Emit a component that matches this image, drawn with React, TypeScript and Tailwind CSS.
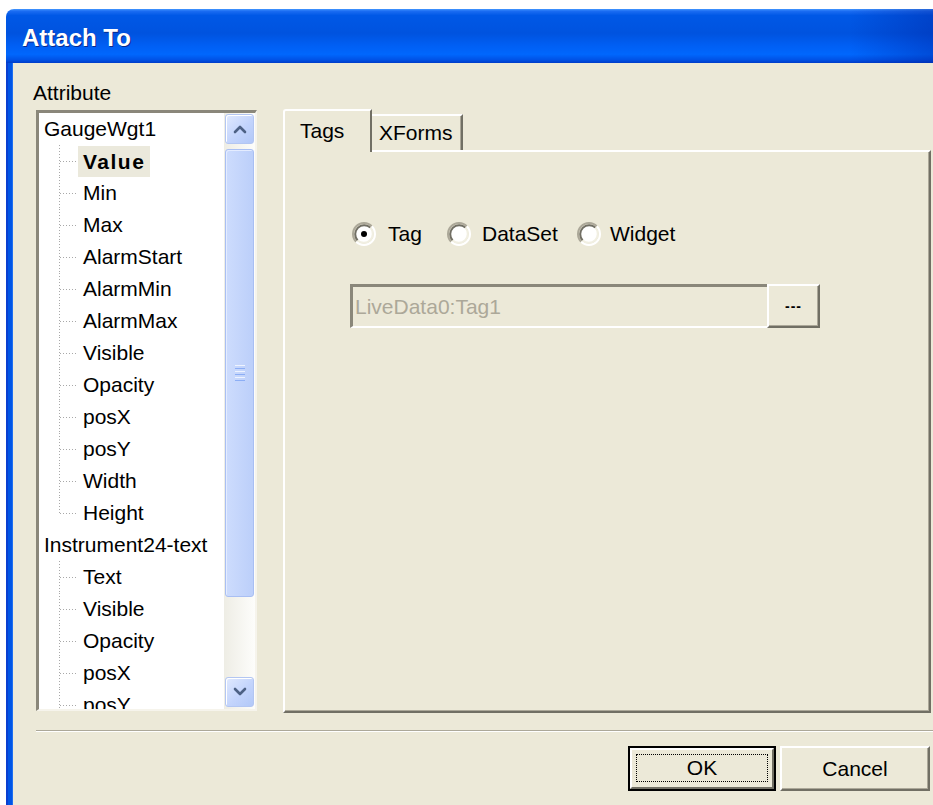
import React from 'react';

type Group = { name: string; items: string[] };

const groups: Group[] = [
  {
    name: 'GaugeWgt1',
    items: ['Value', 'Min', 'Max', 'AlarmStart', 'AlarmMin', 'AlarmMax', 'Visible', 'Opacity', 'posX', 'posY', 'Width', 'Height'],
  },
  {
    name: 'Instrument24-text',
    items: ['Text', 'Visible', 'Opacity', 'posX', 'posY'],
  },
];

// dotted tree connector: vertical guide + branch to the label
const Branch = ({ last }: { last: boolean }) => (
  <svg width="39" height="32" className="shrink-0">
    <line x1="20.5" y1="0" x2="20.5" y2={last ? 16 : 32} stroke="#a8a8a8" strokeDasharray="1 2" />
    <line x1="21" y1="16.5" x2="39" y2="16.5" stroke="#a8a8a8" strokeDasharray="1 2" />
  </svg>
);

const Chevron = ({ up }: { up: boolean }) => (
  <svg width="14" height="10" viewBox="0 0 14 10">
    <path d={up ? 'M2 8 L7 3 L12 8' : 'M2 2 L7 7 L12 2'} fill="none" stroke="#4d6185" strokeWidth="2.6" strokeLinecap="round" strokeLinejoin="round" />
  </svg>
);

const ScrollButton = ({ up }: { up: boolean }) => (
  <div className="h-[30px] rounded-[3px] border border-[#b3c6f2] bg-[linear-gradient(135deg,#e0e9fe_0%,#c3d4fc_55%,#b2c8f8_100%)] flex items-center justify-center shadow-[inset_1px_1px_0_#ffffff]">
    <Chevron up={up} />
  </div>
);

const ScrollBar = () => (
  <div className="w-[31px] h-full flex flex-col px-[1px] pt-[1px] pb-[2px] bg-[linear-gradient(to_right,#eeede5,#fdfdfb)]">
    <ScrollButton up />
    <div className="mt-[5px] h-[448px] rounded-[3px] border border-[#a9bff3] bg-[linear-gradient(to_right,#cddcfd,#bccffa)] shadow-[inset_1px_1px_0_#e4ecff] flex flex-col items-center justify-center gap-[2px]">
      <div className="w-[10px] h-[1px] bg-[#eef3ff]" />
      <div className="w-[10px] h-[1px] bg-[#8caef5]" />
      <div className="w-[10px] h-[1px] bg-[#eef3ff]" />
      <div className="w-[10px] h-[1px] bg-[#8caef5]" />
      <div className="w-[10px] h-[1px] bg-[#eef3ff]" />
      <div className="w-[10px] h-[1px] bg-[#8caef5]" />
    </div>
    <div className="flex-1" />
    <ScrollButton up={false} />
  </div>
);

const TreeBox = () => (
  <div className="mt-[1px] w-[221px] h-[601px] border-t-[3px] border-l-[3px] border-t-[#8a877a] border-l-[#8a877a] border-r-2 border-b-2 border-r-[#f6f4ec] border-b-[#f6f4ec] bg-white flex">
    <div className="flex-1 overflow-hidden">
      {groups.map((g) => (
        <div key={g.name}>
          <div className="h-[32px] leading-[32px] pl-[5px] whitespace-nowrap">{g.name}</div>
          {g.items.map((it, i) => (
            <div key={it + i} className="h-[32px] flex items-center">
              <Branch last={g.name === 'GaugeWgt1' && i === g.items.length - 1} />
              {g.name === 'GaugeWgt1' && i === 0 ? (
                <span className="h-[31px] leading-[31px] px-[5px] bg-[#ebe9dc] font-bold tracking-[1.5px]">{it}</span>
              ) : (
                <span className="pl-[5px] whitespace-nowrap">{it}</span>
              )}
            </div>
          ))}
        </div>
      ))}
    </div>
    <ScrollBar />
  </div>
);

const Radio = ({ checked }: { checked?: boolean }) => (
  <svg width="24" height="24" viewBox="0 0 24 24" className="shrink-0">
    <circle cx="12" cy="12" r="9" fill="#ffffff" />
    <path d="M4.22 19.78 A11 11 0 0 1 19.78 4.22" fill="none" stroke="#aca899" strokeWidth="2" />
    <path d="M19.78 4.22 A11 11 0 0 1 4.22 19.78" fill="none" stroke="#ffffff" strokeWidth="2" />
    <path d="M5.64 18.36 A9 9 0 0 1 18.36 5.64" fill="none" stroke="#716f64" strokeWidth="2" />
    <path d="M18.36 5.64 A9 9 0 0 1 5.64 18.36" fill="none" stroke="#f1efe2" strokeWidth="2" />
    {checked && <circle cx="12" cy="12" r="3" fill="#000000" />}
  </svg>
);

const TabArea = () => (
  <div className="ml-[26px] w-[648px] h-[604px] flex flex-col">
    <div className="h-[41px] flex items-end">
      <div className="relative z-10 -mb-[2px] w-[89px] h-[43px] bg-[#ece9d8] border-l-2 border-t-2 border-r-2 border-l-white border-t-white border-r-[#716f64] rounded-tl-[3px] pl-[15px] pt-[8px]">
        Tags
      </div>
      <div className="w-[91px] h-[36px] border-t-2 border-r-2 border-t-white border-r-[#716f64] shadow-[inset_-1px_0_0_#aca899] pl-[7px] pt-[5px]">
        XForms
      </div>
    </div>
    <div className="flex-1 border-2 border-t-white border-l-white border-r-[#716f64] border-b-[#716f64] shadow-[inset_-1px_-1px_0_#aca899] pl-[65px] pt-[70px]">
      <div className="flex items-center h-[24px] pl-[2px]">
        <div className="w-[95px] flex items-center gap-[12px]">
          <Radio checked />
          <span>Tag</span>
        </div>
        <div className="w-[130px] flex items-center gap-[11px]">
          <Radio />
          <span>DataSet</span>
        </div>
        <div className="flex items-center gap-[9px]">
          <Radio />
          <span>Widget</span>
        </div>
      </div>
      <div className="mt-[38px] flex h-[44px]">
        <div className="w-[417px] border-t-[3px] border-l-[3px] border-t-[#8a877a] border-l-[#8a877a] border-b-2 border-b-white flex items-center pl-[2px] text-[#aca899]">
          LiveData0:Tag1
        </div>
        <div className="w-[53px] border-2 border-t-white border-l-white border-r-[#716f64] border-b-[#716f64] shadow-[inset_-1px_-1px_0_#aca899] flex items-center justify-center text-[14px] font-bold tracking-[1px]">
          ---
        </div>
      </div>
    </div>
  </div>
);

export default function App() {
  return (
    <div className="w-[933px] h-[805px] bg-white overflow-hidden pt-[9px] pl-[6px] font-['Liberation_Sans',Arial,sans-serif]">
      <div className="h-full flex flex-col">
        {/* caption */}
        <div className="h-[54px] rounded-tl-[8px] bg-[linear-gradient(to_right,rgba(0,0,0,0)_91%,rgba(0,28,150,0.35)_100%),linear-gradient(to_bottom,#4497ff_0%,#1b6cf2_4%,#0058e6_12%,#0053df_45%,#005ff4_68%,#0067fd_84%,#0052e6_94%,#003cc8_100%)] pl-[16px] pt-[15px]">
          <span className="text-white font-bold text-[24px] leading-[28px] [text-shadow:1px_1px_0_#0a2a8c]">Attach To</span>
        </div>
        <div className="flex-1 flex">
          <div className="w-[7px] bg-[#0055e6] border-l-2 border-l-[#0a3fd0] border-r border-r-[#1d6ef0]" />
          <div className="flex-1 bg-[#ece9d8] flex flex-col text-[21px] leading-[24px] text-black">
            <div className="pl-[20px] mt-[18px]">Attribute</div>
            <div className="flex pl-[23px] mt-[4px] items-start">
              <TreeBox />
              <TabArea />
            </div>
            <div className="ml-[23px] mt-[17px] border-t border-t-[#aca899] border-b border-b-white" />
            <div className="mt-[14px] flex justify-end pr-[3px] gap-[4px]">
              <div className="w-[148px] h-[45px] border-2 border-black">
                <div className="h-full border-2 border-t-white border-l-white border-r-[#716f64] border-b-[#716f64] p-[4px] pb-[5px]">
                  <div className="h-full border border-dotted border-black flex items-center justify-center">OK</div>
                </div>
              </div>
              <div className="w-[150px] h-[45px] border-2 border-t-white border-l-white border-r-[#716f64] border-b-[#716f64] shadow-[inset_-1px_-1px_0_#aca899] flex items-center justify-center">
                Cancel
              </div>
            </div>
          </div>
        </div>
      </div>
    </div>
  );
}
